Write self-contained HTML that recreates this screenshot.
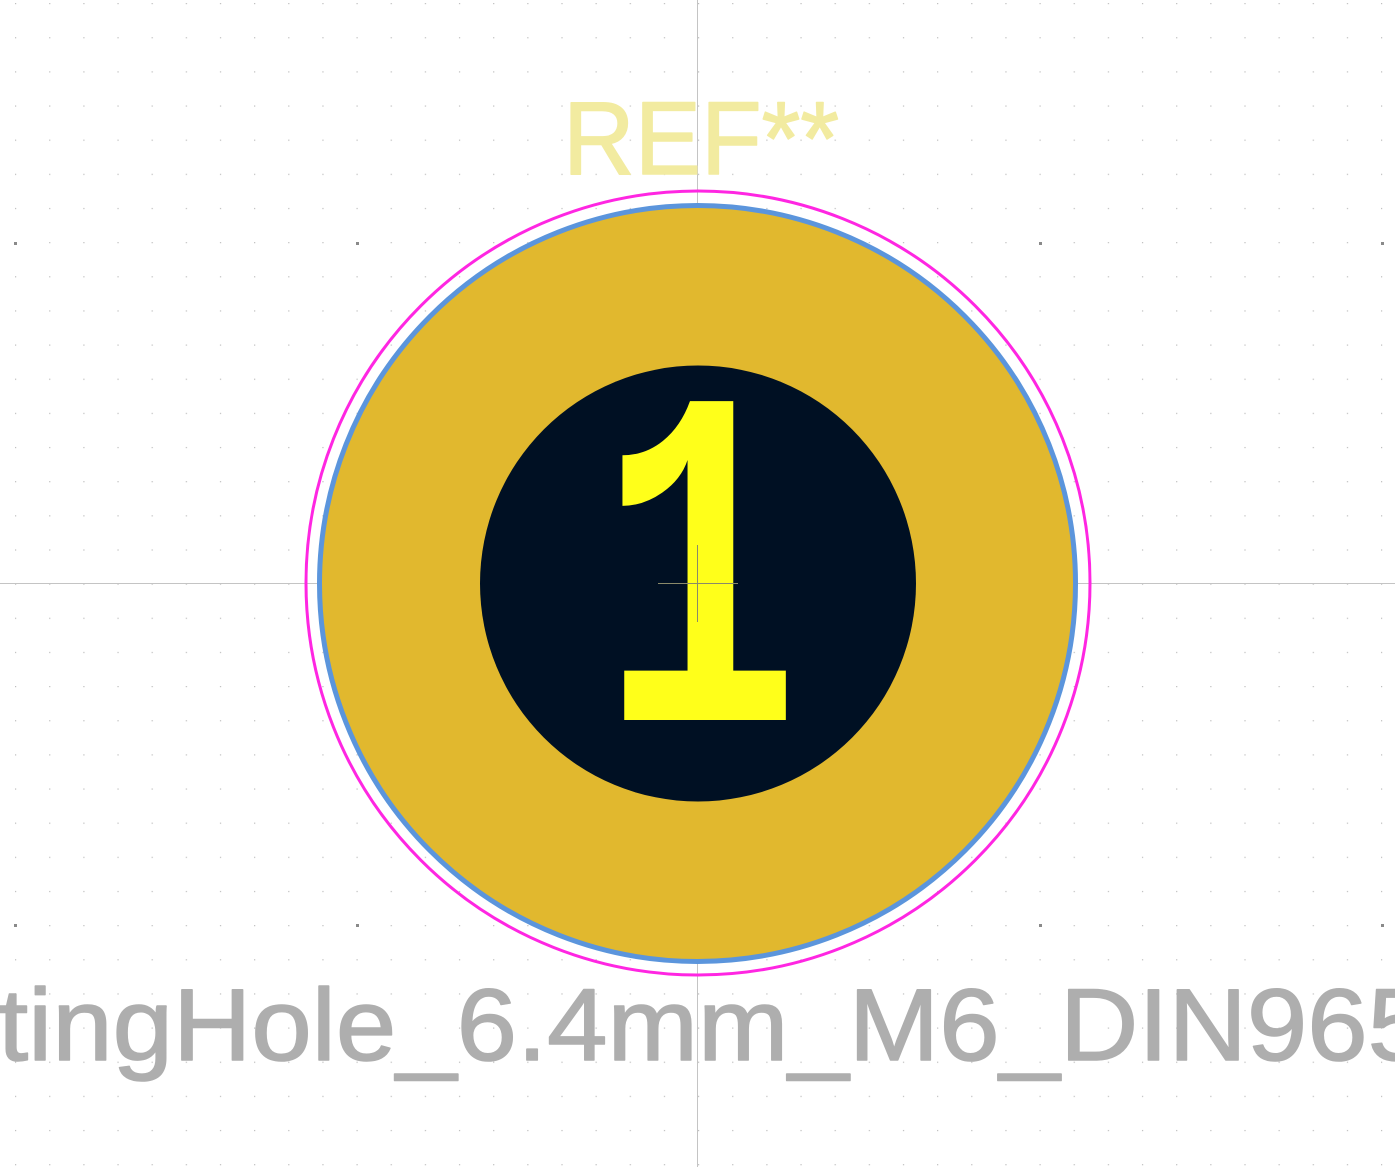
<!DOCTYPE html>
<html><head><meta charset="utf-8"><style>
html,body{margin:0;padding:0;background:#fff;}
svg{display:block}
</style></head><body>
<svg width="1395" height="1167" viewBox="0 0 1395 1167" xmlns="http://www.w3.org/2000/svg">
<defs>
<pattern id="g" x="15" y="3" width="34.15" height="34.15" patternUnits="userSpaceOnUse">
<rect x="0" y="0" width="1.2" height="1.2" fill="#bdbdbd"/>
</pattern>
</defs>
<rect width="1395" height="1167" fill="#fff"/>
<rect width="1395" height="1167" fill="url(#g)"/>
<g fill="#8a8a8a">
<rect x="14" y="242" width="3" height="3"/><rect x="356" y="242" width="3" height="3"/><rect x="1039" y="242" width="3" height="3"/><rect x="1381" y="242" width="3" height="3"/>
<rect x="14" y="924" width="3" height="3"/><rect x="356" y="924" width="3" height="3"/><rect x="1039" y="924" width="3" height="3"/><rect x="1381" y="924" width="3" height="3"/>
</g>
<line x1="697.5" y1="0" x2="697.5" y2="1167" stroke="#c4c4c4" stroke-width="1"/>
<line x1="0" y1="583.5" x2="1395" y2="583.5" stroke="#c4c4c4" stroke-width="1"/>
<text x="563" y="174" font-family="Liberation Sans, sans-serif" font-size="104" fill="#f2eba0" stroke="#f2eba0" stroke-width="1.5" stroke-linejoin="round" textLength="276" lengthAdjust="spacingAndGlyphs">REF**</text>
<circle cx="698" cy="583" r="392" fill="none" stroke="#ff26e2" stroke-width="3"/>
<circle cx="697.5" cy="583.5" r="378" fill="#e1b82e" stroke="#5b95dc" stroke-width="5"/>
<circle cx="698" cy="583.5" r="218" fill="#001023"/>
<g transform="translate(0,720) scale(1,1.1) translate(0,-720)">
<text x="600" y="720" font-family="Liberation Mono, monospace" font-weight="bold" font-size="440" fill="#ffff1a" textLength="200" lengthAdjust="spacingAndGlyphs">1</text>
</g>
<line x1="697.5" y1="545" x2="697.5" y2="622" stroke="#8a8a6a" stroke-width="1"/>
<line x1="658" y1="583.5" x2="738" y2="583.5" stroke="#8a8a6a" stroke-width="1"/>
<text x="-2" y="1060" font-family="Liberation Sans, sans-serif" font-size="102" fill="#aeaeae" stroke="#aeaeae" stroke-width="1.5" stroke-linejoin="round" textLength="1430" lengthAdjust="spacingAndGlyphs">tingHole_6.4mm_M6_DIN965</text>
</svg>
</body></html>
